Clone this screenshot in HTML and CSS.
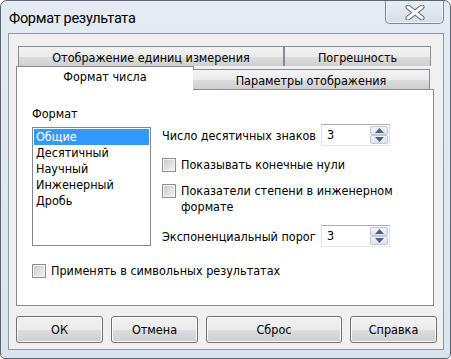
FILE: index.html
```
<!DOCTYPE html>
<html lang="ru">
<head>
<meta charset="utf-8">
<title>Формат результата</title>
<link rel="stylesheet" href="styles.css">
</head>
<body>
<div class="window">
  <div class="titlebar">
    <div class="title">Формат результата</div>
    <div class="close">
      <svg width="20" height="15" viewBox="0 0 20 15">
        <path d="M3 2 L17 13 M17 2 L3 13" stroke="#5f6670" stroke-width="5" stroke-linecap="round" fill="none"/>
        <path d="M3 2 L17 13 M17 2 L3 13" stroke="#ffffff" stroke-width="3" stroke-linecap="round" fill="none"/>
      </svg>
    </div>
  </div>
  <div class="client">
    <div class="tabs">
      <div class="tabrow row1">
        <div class="tab t-units">Отображение единиц измерения</div>
        <div class="tab t-err">Погрешность</div>
      </div>
      <div class="tabrow row2">
        <div class="tab sel t-fmt">Формат числа</div>
        <div class="tab t-disp">Параметры отображения</div>
      </div>
    </div>
    <div class="panel">
      <div class="cols">
        <div class="leftcol">
          <div class="label">Формат</div>
          <div class="listbox">
            <div class="item selected">Общие</div>
            <div class="item">Десятичный</div>
            <div class="item">Научный</div>
            <div class="item">Инженерный</div>
            <div class="item">Дробь</div>
          </div>
        </div>
        <div class="rightcol">
          <div class="spinrow">
            <span class="spinlabel">Число десятичных знаков</span>
            <div class="spin">
              <span class="val">3</span>
              <div class="spinbtns">
                <div class="sb"><svg width="9" height="5" viewBox="0 0 9 5"><path d="M0 5 L4.5 0 L9 5 Z" fill="#4c6185"/></svg></div>
                <div class="sb"><svg width="9" height="5" viewBox="0 0 9 5"><path d="M0 0 L4.5 5 L9 0 Z" fill="#4c6185"/></svg></div>
              </div>
            </div>
          </div>
          <div class="check c1"><span class="box"></span><span class="ctext">Показывать конечные нули</span></div>
          <div class="check c2"><span class="box"></span><span class="ctext">Показатели степени в инженерном формате</span></div>
          <div class="spinrow s2">
            <span class="spinlabel">Экспоненциальный порог</span>
            <div class="spin">
              <span class="val">3</span>
              <div class="spinbtns">
                <div class="sb"><svg width="9" height="5" viewBox="0 0 9 5"><path d="M0 5 L4.5 0 L9 5 Z" fill="#4c6185"/></svg></div>
                <div class="sb"><svg width="9" height="5" viewBox="0 0 9 5"><path d="M0 0 L4.5 5 L9 0 Z" fill="#4c6185"/></svg></div>
              </div>
            </div>
          </div>
        </div>
      </div>
      <div class="check c3"><span class="box"></span><span class="ctext">Применять в символьных результатах</span></div>
    </div>
    <div class="buttons">
      <div class="btn w87">ОК</div>
      <div class="btn w87">Отмена</div>
      <div class="btn grow">Сброс</div>
      <div class="btn w87">Справка</div>
    </div>
  </div>
</div>
</body>
</html>
```
FILE: styles.css
```
* { box-sizing: border-box; }
html, body { margin: 0; padding: 0; background: #ffffff; }
body { font-family: "DejaVu Sans Condensed", "DejaVu Sans", sans-serif; font-size: 12.5px; color: #000; }

.window {
  width: 451px; height: 359px;
  border: 1px solid #5a6470;
  border-radius: 7px 7px 5px 5px;
  background: linear-gradient(#e4ebf3, #dbe4ee);
  display: flex; flex-direction: column;
  overflow: hidden;
}
.titlebar { height: 32px; display: flex; align-items: flex-start; }
.title {
  font-family: Roboto, "Liberation Sans", sans-serif; font-size: 14.5px; letter-spacing: -0.3px;
  padding: 9px 0 0 8px; color: #000; flex: 1;
}
.close {
  width: 59px; height: 24px; margin-right: 6px; margin-top: -1px;
  border: 1px solid #7c8794; border-top: none;
  border-radius: 0 0 5px 5px;
  background: linear-gradient(#e7edf4, #d6dfe9);
  box-shadow: inset 0 0 0 1px rgba(255,255,255,0.6);
  display: flex; align-items: center; justify-content: center;
}
.close svg { margin-top: 1px; }

.client {
  flex: 1; margin: 0 6px 8px 7px;
  border: 1px solid #8e99a6;
  background: #f0f0f0;
  padding: 12px 8px 0 7px;
  display: flex; flex-direction: column;
}

.tabrow { display: flex; }
.row1 { margin-left: 2px; height: 20px; }
.row2 { height: 24px; margin-top: -1px; align-items: flex-end; position: relative; z-index: 1; }
.tab {
  border: 1px solid #898c95; border-bottom: none;
  background: linear-gradient(#f3f3f3 0%, #ebebeb 50%, #dddddd 51%, #cfcfcf 100%);
  display: flex; align-items: center; justify-content: center;
  padding-top: 1px;
}
.t-units { width: 266px; height: 20px; }
.t-err { width: 147px; height: 20px; margin-left: 0; }
.t-fmt { width: 178px; height: 24px; background: #ffffff; margin-bottom: -1px; padding-bottom: 5px; }
.t-disp { width: 237px; height: 20px; margin-left: -1px; border-left: none; }

.panel {
  width: 418px; height: 217px;
  border: 1px solid #898c95;
  background: #ffffff;
  padding: 0 0 0 15px;
  display: flex; flex-direction: column;
}
.cols { display: flex; gap: 11px; }
.leftcol { width: 119px; padding-top: 17px; }
.label { height: 14px; line-height: 14px; }
.listbox {
  margin-top: 6px; width: 119px; height: 119px;
  border: 1px solid #828790; padding: 1px;
}
.item { height: 16px; line-height: 16px; padding-left: 2px; }
.item.selected { background: #3399ff; color: #ffffff; }

.rightcol { padding-top: 34px; display: flex; flex-direction: column; }
.spinrow { display: flex; align-items: center; height: 22px; gap: 4px; }
.spinrow.s2 { margin-top: 10px; }
.spinlabel { width: 155px; white-space: nowrap; }
.spin {
  width: 69px; height: 22px;
  border: 1px solid #dbdfe6; border-top-color: #abadb3; border-bottom-color: #e3e9ef;
  display: flex; background: #fff;
}
.val { flex: 1; padding-left: 5px; line-height: 19px; }
.spinbtns { width: 19px; display: flex; flex-direction: column; gap: 0; padding: 1px 1px 1px 0; }
.sb {
  flex: 1; border: 1px solid #c2c7cf;
  background: linear-gradient(#f2f4f8, #dde3ec);
  display: flex; align-items: center; justify-content: center;
  border-radius: 2px;
}
.check { display: flex; align-items: flex-start; gap: 5px; line-height: 16px; }
.box {
  width: 14px; height: 14px; flex: none; margin-top: 1px;
  border: 1px solid #8f8f8f;
  background: linear-gradient(135deg, #c8c8c8, #f4f4f4);
  box-shadow: inset 0 0 0 1px #f2f2f2;
}
.c1 { margin-top: 11px; }
.c2 { margin-top: 10px; }
.c2 .ctext { width: 218px; }
.c3 { margin-top: 16px; }

.buttons { display: flex; gap: 8px; margin-top: 10px; margin-right: -2px; }
.btn {
  height: 27px;
  border: 1px solid #707070; border-radius: 3px;
  background: linear-gradient(#f2f2f2 0%, #ebebeb 50%, #dddddd 51%, #cfcfcf 100%);
  box-shadow: inset 0 0 0 1px #fcfcfc;
  display: flex; align-items: center; justify-content: center;
}
.w87 { width: 87px; }
.grow { flex: 1; }
```
